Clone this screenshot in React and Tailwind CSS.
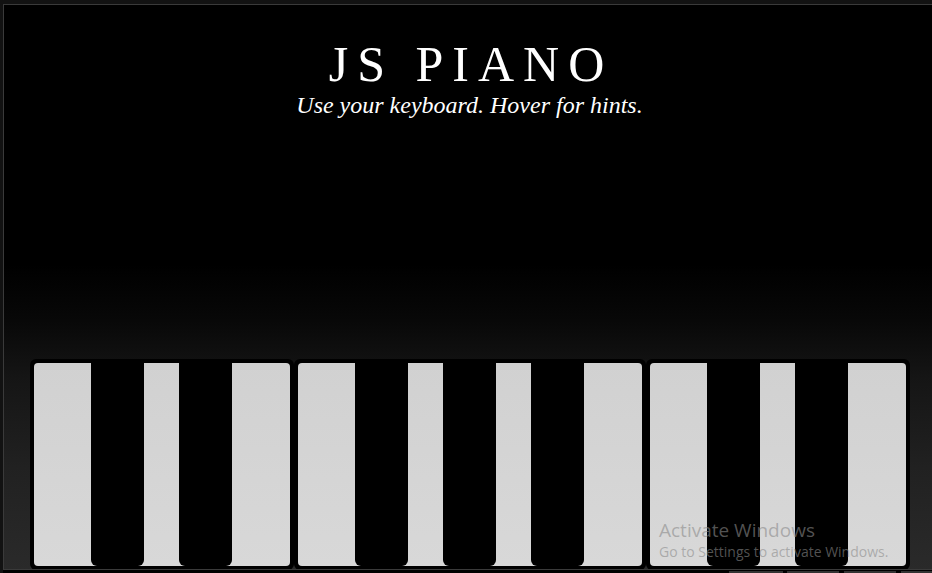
const groups = [
  { whites: 3, blacks: 2, width: "w-[264px]" },
  { whites: 4, blacks: 3, width: "w-[352px]" },
  { whites: 3, blacks: 2, width: "w-[264px]" },
];

const blackLeft = ["left-[61px]", "left-[149px]", "left-[237px]"];

const KeyGroup = ({ whites, blacks, width }) => (
  <div className={`relative flex h-[211px] shrink-0 rounded-[6px] bg-black p-[4px] ${width}`}>
    {Array.from({ length: whites }).map((_, i) => (
      <div
        key={i}
        className="h-full flex-1 rounded-[4px] bg-[linear-gradient(to_bottom,#d1d1d1,#d8d8d8)]"
      />
    ))}
    {Array.from({ length: blacks }).map((_, i) => (
      <div
        key={"b" + i}
        className={`absolute top-0 bottom-[4px] w-[53px] rounded-b-[6px] bg-black ${blackLeft[i]}`}
      />
    ))}
  </div>
);

export default function App() {
  return (
    <div className="relative h-[573px] w-[932px] overflow-hidden bg-[#121212] pl-[3px] pt-[4px]">
      <div className="border-l border-t border-[#3a3a3a]">
        <div className="flex h-[564px] flex-col overflow-hidden bg-[linear-gradient(to_bottom,#000_0%,#000_46%,#080808_56%,#151515_66%,#212121_82%,#2a2a2a_100%)]">
          <h1
            className="mt-[34px] pl-[6px] text-center text-[50px] leading-none font-normal tracking-[9px] text-white"
            style={{ fontFamily: '"Liberation Serif", "Times New Roman", serif' }}
          >
            JS PIANO
          </h1>
          <p
            className="mt-[4px] pl-[3px] text-center text-[24px] leading-none italic text-white"
            style={{ fontFamily: '"Liberation Serif", "Times New Roman", serif' }}
          >
            Use your keyboard. Hover for hints.
          </p>
          <div className="mt-auto mb-[-1px] flex pl-[26px]">
            {groups.map((g, i) => (
              <KeyGroup key={i} {...g} />
            ))}
          </div>
        </div>
      </div>
      <div className="h-px bg-[#3a3a3a]" />
      <div className="flex h-[4px] bg-black pt-px">
        <div className="ml-[726px] h-full w-[54px] bg-[#333]" />
        <div className="ml-[4px] h-full w-[52px] bg-[#333]" />
        <div className="ml-[5px] h-full w-[52px] bg-[#333]" />
        <div className="ml-[5px] h-full flex-1 bg-[#333]" />
      </div>

      <div
        className="absolute left-[659px] top-[518px] text-[#8b8b8b]/60"
        style={{ fontFamily: '"Open Sans", "Noto Sans", sans-serif' }}
      >
        <div className="text-[19px] leading-[24px]">Activate Windows</div>
        <div className="text-[14px] leading-[20px]">Go to Settings to activate Windows.</div>
      </div>
    </div>
  );
}
